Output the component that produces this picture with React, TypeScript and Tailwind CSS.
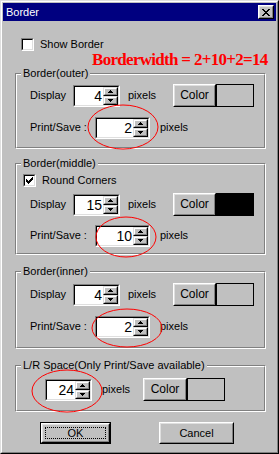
import React from "react";

const raisedOuter = "border border-t-white border-l-white border-r-black border-b-black";
const raisedInner = "border border-t-[#dfdfdf] border-l-[#dfdfdf] border-r-[#808080] border-b-[#808080]";
const sunkenOuter = "border border-t-[#808080] border-l-[#808080] border-r-white border-b-white";
const sunkenInner = "border border-t-black border-l-black border-r-[#dfdfdf] border-b-[#dfdfdf]";

// tiny pixel-art glyph: each "X" is one black pixel
function Pixels({ rows }: { rows: string[] }) {
  const w = rows[0].length;
  const h = rows.length;
  return (
    <svg width={w} height={h} viewBox={`0 0 ${w} ${h}`} shapeRendering="crispEdges">
      {rows.flatMap((r, y) =>
        r.split("").map((c, x) => (c === "X" ? <rect key={`${x}-${y}`} x={x} y={y} width={1} height={1} fill="#000" /> : null))
      )}
    </svg>
  );
}

const closeGlyph = ["XX....XX", ".XX..XX.", "..XXXX..", "...XX...", "..XXXX..", ".XX..XX.", "XX....XX"];
const checkGlyph = ["......X", ".....XX", "X...XXX", "XX.XXX.", "XXXXX..", ".XXX...", "..X...."];
const upGlyph = ["..X..", ".XXX.", "XXXXX"];
const downGlyph = ["XXXXX", ".XXX.", "..X.."];

function Checkbox({ checked }: { checked?: boolean }) {
  return (
    <div className={`h-[13px] w-[13px] ${sunkenOuter}`}>
      <div className={`flex h-full w-full items-center justify-center bg-white ${sunkenInner}`}>
        {checked && <Pixels rows={checkGlyph} />}
      </div>
    </div>
  );
}

function SpinBtn({ up }: { up?: boolean }) {
  return (
    <div className="h-[9px] border border-t-[#dfdfdf] border-l-[#dfdfdf] border-r-black border-b-black">
      <div className="flex h-full items-center justify-center border border-t-white border-l-white border-r-[#808080] border-b-[#808080] bg-[#c0c0c0]">
        <Pixels rows={up ? upGlyph : downGlyph} />
      </div>
    </div>
  );
}

function Spinner({ value, wide }: { value: string; wide?: boolean }) {
  return (
    <div className={`h-[22px] ${wide ? "w-[55px]" : "w-[47px]"} ${sunkenOuter}`}>
      <div className={`flex h-full bg-white ${sunkenInner}`}>
        <div className="flex-1 pr-[1px] text-right text-[14px] leading-[18px]">{value}</div>
        <div className="flex w-[15px] flex-col">
          <SpinBtn up />
          <SpinBtn />
        </div>
      </div>
    </div>
  );
}

function ColorButton({ swatch, btnW }: { swatch: string; btnW: string }) {
  return (
    <div className="flex h-[23px]">
      <div className={`${btnW} ${raisedOuter}`}>
        <div className={`flex h-full items-center justify-center text-[12px] ${raisedInner}`}>Color</div>
      </div>
      <div className={`w-[38px] border border-black ${swatch}`} />
    </div>
  );
}

function Group({ label, className, children }: { label: string; className: string; children: React.ReactNode }) {
  return (
    <div className="relative border border-t-[#808080] border-l-[#808080] border-r-white border-b-white">
      <div className={`flex flex-col border border-t-white border-l-white border-r-[#808080] border-b-[#808080] ${className}`}>
        {children}
      </div>
      <span className="absolute -top-[7px] left-[5px] bg-[#c0c0c0] px-[2px] text-[11px] leading-[13px]">{label}</span>
    </div>
  );
}

function DisplayRow({ value, swatch }: { value: string; swatch: string }) {
  return (
    <div className="flex h-[23px] items-center pl-[13px]">
      <span className="w-[43px]">Display</span>
      <Spinner value={value} />
      <span className="ml-[8px] w-[45px]">pixels</span>
      <ColorButton swatch={swatch} btnW="w-[43px]" />
    </div>
  );
}

function PrintRow({ value }: { value: string }) {
  return (
    <div className="flex h-[23px] items-center pl-[13px]">
      <span className="w-[65px]">Print/Save :</span>
      <Spinner value={value} wide />
      <span className="ml-[10px]">pixels</span>
    </div>
  );
}

export default function App() {
  return (
    <div className="relative h-[454px] w-[279px] font-['Liberation_Sans',sans-serif] text-[11px] leading-[13px] text-black">
      <div className="h-full w-full border border-t-[#dfdfdf] border-l-[#dfdfdf] border-r-black border-b-black bg-[#c0c0c0]">
        <div className="h-full w-full border border-t-white border-l-white border-r-[#808080] border-b-[#808080] p-[1px]">
          {/* title bar */}
          <div className="flex h-[18px] items-center justify-between bg-[#000080] pl-[3px] pr-[2px]">
            <span className="text-[11px] text-white">Border</span>
            <div className={`h-[14px] w-[16px] ${raisedOuter} bg-[#c0c0c0]`}>
              <div className={`flex h-full items-center justify-center ${raisedInner}`}>
                <Pixels rows={closeGlyph} />
              </div>
            </div>
          </div>

          <div className="flex h-[13px] items-center gap-[6px] pl-[18px] mt-[17px]">
            <Checkbox />
            <span>Show Border</span>
          </div>
          <div className="pl-[89px] font-['Liberation_Serif',serif] text-[17px] font-bold leading-[18px] tracking-[-0.7px] text-[#ff0000]">
            Borderwidth = 2+10+2=14
          </div>

          <div className="ml-[12px] w-[251px]">
            <div className="mt-[4px]">
              <Group label="Border(outer)" className="gap-[9px] pt-[9px] pb-[8px]">
                <DisplayRow value="4" swatch="bg-[#c0c0c0]" />
                <PrintRow value="2" />
              </Group>
            </div>

            <div className="mt-[14px]">
              <Group label="Border(middle)" className="pt-[9px] pb-[6px]">
                <div className="flex h-[13px] items-center gap-[6px] pl-[6px]">
                  <Checkbox checked />
                  <span>Round Corners</span>
                </div>
                <div className="mt-[6px]">
                  <DisplayRow value="15" swatch="bg-black" />
                </div>
                <div className="mt-[8px]">
                  <PrintRow value="10" />
                </div>
              </Group>
            </div>

            <div className="mt-[16px]">
              <Group label="Border(inner)" className="gap-[9px] pt-[10px] pb-[9px]">
                <DisplayRow value="4" swatch="bg-[#c0c0c0]" />
                <PrintRow value="2" />
              </Group>
            </div>

            <div className="mt-[16px]">
              <Group label="L/R Space(Only Print/Save available)" className="pt-[11px] pb-[9px]">
                <div className="flex h-[23px] items-center pl-[28px]">
                  <Spinner value="24" />
                  <span className="ml-[10px] w-[41px]">pixels</span>
                  <ColorButton swatch="bg-[#c0c0c0]" btnW="w-[44px]" />
                </div>
              </Group>
            </div>
          </div>

          <div className="mt-[10px] flex pl-[37px]">
            <div className="h-[22px] w-[71px] border border-black">
              <div className={`h-full ${raisedOuter}`}>
                <div className={`flex h-full items-center justify-center p-[2px] ${raisedInner}`}>
                  <div className="flex h-full w-full items-center justify-center border border-dotted border-black">OK</div>
                </div>
              </div>
            </div>
            <div className={`ml-[48px] h-[22px] w-[75px] ${raisedOuter}`}>
              <div className={`flex h-full items-center justify-center ${raisedInner}`}>Cancel</div>
            </div>
          </div>
        </div>
      </div>

      {/* red hand-drawn annotations */}
      <svg className="pointer-events-none absolute left-0 top-0" width={279} height={454}>
        <g fill="none" stroke="#ff0000" strokeWidth={1}>
          <ellipse cx={123} cy={127} rx={35} ry={22} />
          <ellipse cx={126} cy={237} rx={30} ry={20} />
          <ellipse cx={127} cy={328} rx={35} ry={19} />
          <ellipse cx={67} cy={391} rx={35} ry={21} />
        </g>
      </svg>
    </div>
  );
}
